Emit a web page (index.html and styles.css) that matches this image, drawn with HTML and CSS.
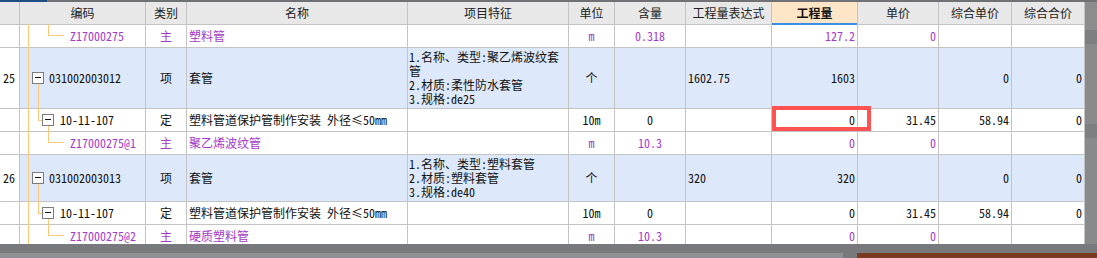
FILE: index.html
```html
<!DOCTYPE html>
<html lang="zh-CN">
<head>
<meta charset="utf-8">
<title>清单定额表</title>
<link rel="stylesheet" href="styles.css">
</head>
<body>
<div class="page">
  <div class="topbar"><div class="tb-blue"></div><div class="tb-gray"></div></div>
  <div class="main">
    <div class="table">
      <!-- header -->
      <div class="c hd"></div>
      <div class="c hd">编码</div>
      <div class="c hd">类别</div>
      <div class="c hd">名称</div>
      <div class="c hd">项目特征</div>
      <div class="c hd">单位</div>
      <div class="c hd">含量</div>
      <div class="c hd">工程量表达式</div>
      <div class="c hd act">工程量</div>
      <div class="c hd">单价</div>
      <div class="c hd">综合单价</div>
      <div class="c hd">综合合价</div>

      <!-- row 1 -->
      <div class="c rn"></div>
      <div class="c code leaf pu"><i class="ln trunk"></i><i class="ln up2"></i><i class="ln h2"></i>Z17000275</div>
      <div class="c ctr pu">主</div>
      <div class="c pu">塑料管</div>
      <div class="c"></div>
      <div class="c ctr pu">m</div>
      <div class="c ctr pu">0.318</div>
      <div class="c"></div>
      <div class="c r pu">127.2</div>
      <div class="c r pu">0</div>
      <div class="c"></div>
      <div class="c"></div>

      <!-- row 2 -->
      <div class="c rn">25</div>
      <div class="c code lv1 blue"><i class="ln trunk"></i><i class="ln down1"></i><span class="box"></span>031002003012</div>
      <div class="c ctr blue">项</div>
      <div class="c blue">套管</div>
      <div class="c feat blue"><span>1.名称、类型:聚乙烯波纹套</span><span>管</span><span>2.材质:柔性防水套管</span><span>3.规格:de25</span></div>
      <div class="c ctr blue">个</div>
      <div class="c blue"></div>
      <div class="c blue">1602.75</div>
      <div class="c r blue">1603</div>
      <div class="c blue"></div>
      <div class="c r blue">0</div>
      <div class="c r blue">0</div>

      <!-- row 3 -->
      <div class="c rn"></div>
      <div class="c code lv2"><i class="ln trunk"></i><i class="ln up1"></i><i class="ln h1"></i><i class="ln down2"></i><span class="box"></span>10-11-107</div>
      <div class="c ctr">定</div>
      <div class="c">塑料管道保护管制作安装 外径≤50mm</div>
      <div class="c"></div>
      <div class="c ctr">10m</div>
      <div class="c ctr">0</div>
      <div class="c"></div>
      <div class="c r">0</div>
      <div class="c r">31.45</div>
      <div class="c r">58.94</div>
      <div class="c r">0</div>

      <!-- row 4 -->
      <div class="c rn"></div>
      <div class="c code leaf pu"><i class="ln trunk"></i><i class="ln up2"></i><i class="ln h2"></i>Z17000275@1</div>
      <div class="c ctr pu">主</div>
      <div class="c pu">聚乙烯波纹管</div>
      <div class="c"></div>
      <div class="c ctr pu">m</div>
      <div class="c ctr pu">10.3</div>
      <div class="c"></div>
      <div class="c r pu">0</div>
      <div class="c r pu">0</div>
      <div class="c"></div>
      <div class="c"></div>

      <!-- row 5 -->
      <div class="c rn">26</div>
      <div class="c code lv1 blue"><i class="ln trunk"></i><i class="ln down1"></i><span class="box"></span>031002003013</div>
      <div class="c ctr blue">项</div>
      <div class="c blue">套管</div>
      <div class="c feat blue"><span>1.名称、类型:塑料套管</span><span>2.材质:塑料套管</span><span>3.规格:de40</span></div>
      <div class="c ctr blue">个</div>
      <div class="c blue"></div>
      <div class="c blue">320</div>
      <div class="c r blue">320</div>
      <div class="c blue"></div>
      <div class="c r blue">0</div>
      <div class="c r blue">0</div>

      <!-- row 6 -->
      <div class="c rn"></div>
      <div class="c code lv2"><i class="ln trunk"></i><i class="ln up1"></i><i class="ln h1"></i><i class="ln down2"></i><span class="box"></span>10-11-107</div>
      <div class="c ctr">定</div>
      <div class="c">塑料管道保护管制作安装 外径≤50mm</div>
      <div class="c"></div>
      <div class="c ctr">10m</div>
      <div class="c ctr">0</div>
      <div class="c"></div>
      <div class="c r">0</div>
      <div class="c r">31.45</div>
      <div class="c r">58.94</div>
      <div class="c r">0</div>

      <!-- row 7 -->
      <div class="c rn"></div>
      <div class="c code leaf pu"><i class="ln trunk"></i><i class="ln up2"></i><i class="ln h2"></i>Z17000275@2</div>
      <div class="c ctr pu">主</div>
      <div class="c pu">硬质塑料管</div>
      <div class="c"></div>
      <div class="c ctr pu">m</div>
      <div class="c ctr pu">10.3</div>
      <div class="c"></div>
      <div class="c r pu">0</div>
      <div class="c r pu">0</div>
      <div class="c"></div>
      <div class="c"></div>

      <div class="mark"></div>
    </div>
    <div class="side">
      <div class="sd-a"></div><div class="sd-b"></div><div class="sd-a2"></div><div class="sd-b"></div><div class="sd-a3"></div>
    </div>
  </div>
  <div class="bottom">
    <div class="b1"></div>
    <div class="b2"><div class="b2a"></div><div class="b2b"></div><div class="b2c"></div></div>
  </div>
</div>
</body>
</html>
```

FILE: styles.css
```css
* { box-sizing: border-box; }

body {
  margin: 0;
  width: 1097px;
  height: 258px;
  overflow: hidden;
  background: #7b7d80;
  font-family: "Noto Sans Mono CJK SC", "Noto Sans CJK SC", sans-serif;
  font-size: 12px;
  color: #111;
}

.page {
  display: flex;
  flex-direction: column;
  height: 258px;
}

.topbar {
  display: flex;
  height: 2px;
}
.tb-blue { width: 47px; background: #1d4e86; }
.tb-gray { flex: 1; background: #6f7175; }

.main {
  display: flex;
  height: 242px;
}

.table {
  position: relative;
  width: 1085px;
  height: 242px;
  overflow: hidden;
  display: grid;
  grid-template-columns: 19px 125px 40px 220px 160px 45px 70px 85px 85px 80px 72px 72px;
  grid-template-rows: 22px 22px 60px 22px 22px 46px 22px 22px;
  gap: 1px;
  padding-right: 1px;
  align-content: start;
  background: #c4c4c4;
}

.c {
  display: flex;
  align-items: center;
  padding: 0 2px;
  background: #fff;
  white-space: nowrap;
  line-height: 14px;
}

.hd {
  position: relative;
  justify-content: center;
  background: #e8e8e8;
  color: #222;
  font-family: "Noto Sans CJK SC", sans-serif;
}
.hd.act {
  background: #fde5c8;
  font-weight: bold;
  color: #111;
}
.hd.act::after {
  content: "";
  position: absolute;
  left: 0;
  right: 0;
  bottom: -1px;
  height: 2px;
  background: #3b8ee6;
}

.rn { padding-left: 3px; }
.blue { background: #dde9fb; }
.pu { color: #a43bc6; }
.ctr { justify-content: center; }
.r { justify-content: flex-end; }

.feat {
  flex-direction: column;
  align-items: flex-start;
  justify-content: center;
  padding-left: 1px;
}

/* tree column */
.code { position: relative; }
.code.lv1 { padding-left: 12px; }
.code.lv2 { padding-left: 22px; }
.code.leaf { padding-left: 50px; }

.box {
  position: relative;
  width: 12px;
  height: 12px;
  margin-right: 5px;
  border: 1px solid #7c7c7c;
  background: #fff;
  flex: none;
}
.lv2 .box { margin-right: 6px; }
.box::after {
  content: "";
  position: absolute;
  left: 2px;
  top: 4px;
  width: 6px;
  height: 1px;
  background: #111;
}

.ln {
  position: absolute;
  background: #fcc97c;
}
.trunk { left: 8px; top: -1px; bottom: -1px; width: 1px; }
.down1 { left: 18px; top: calc(50% + 6px); bottom: -1px; width: 1px; }
.up1 { left: 18px; top: -1px; height: calc(50% + 1px); width: 1px; }
.h1 { left: 18px; top: 50%; width: 4px; height: 1px; }
.down2 { left: 28px; top: calc(50% + 6px); bottom: -1px; width: 1px; }
.up2 { left: 28px; top: -1px; height: 11px; width: 1px; }
.h2 { left: 28px; top: 10px; width: 16px; height: 1px; }

.mark {
  position: absolute;
  left: 772px;
  top: 104px;
  width: 99px;
  height: 25px;
  border: 4px solid #ff5252;
}

.side {
  flex: 1;
  display: flex;
  flex-direction: column;
  background: #8a8b8d;
}
.sd-a { height: 28px; background: #8c8c8c; }
.sd-b { height: 14px; background: #7d7f82; }
.sd-a2 { height: 80px; background: #8a8a8a; }
.sd-a3 { flex: 1; background: #898a8c; }

.bottom {
  display: flex;
  flex-direction: column;
  height: 14px;
}
.b1 { height: 9px; background: #77797c; }
.b2 { display: flex; flex: 1; }
.b2a { width: 843px; background: #8e9093; }
.b2b { width: 14px; background: #77797c; }
.b2c { flex: 1; background: #7b3b22; }
```
